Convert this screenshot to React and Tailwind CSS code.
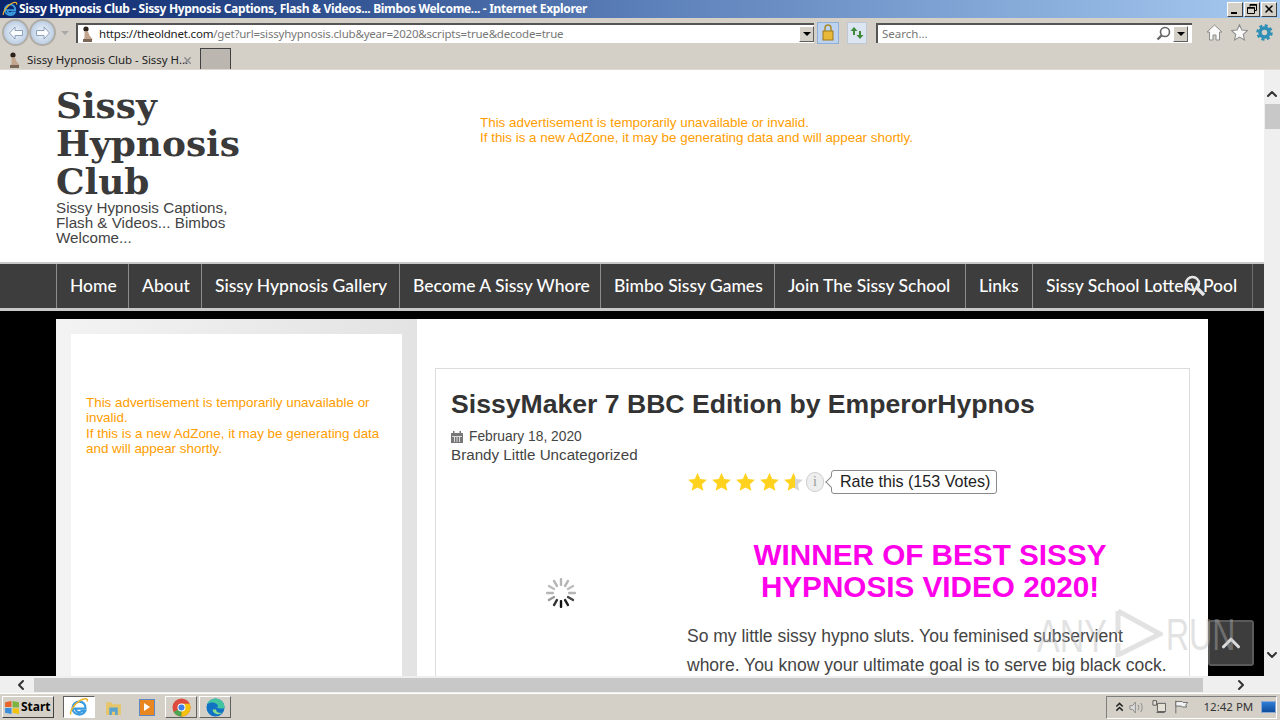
import { ChevronUp, ChevronDown, ChevronLeft, ChevronRight, X } from "lucide-react"

const sans = "font-['Liberation_Sans',Arial,sans-serif]"
const navItems = ["Home", "About", "Sissy Hypnosis Gallery", "Become A Sissy Whore", "Bimbo Sissy Games", "Join The Sissy School", "Links", "Sissy School Lottery Pool"]
const navWidths = ["w-[72px]", "w-[73px]", "w-[198px]", "w-[201px]", "w-[174px]", "w-[191px]", "w-[67px]", "w-[220px]"]

function IeLogo({ size = 16 }) {
  return (
    <svg width={size} height={size} viewBox="0 0 16 16" fill="none">
      <path d="M3.500 9.200h9.700C13.400 5.800 11.200 3.600 8.200 3.600 5.200 3.600 2.800 6 2.800 9c0 3 2.400 5 5.400 5 2.200 0 3.900-1 4.700-2.700H10c-.5.600-1.100.9-1.900.9-1.400 0-2.500-1-2.600-2.200" stroke="#3a9be0" strokeWidth="1.800" />
      <path d="M1.500 14C.2 11.500 5 4 11 1.800c2.800-1 4.200-.2 3.600 1.800" stroke="#f0b429" strokeWidth="1.200" />
    </svg>
  )
}

function Favicon() {
  return (
    <svg width="14" height="16" viewBox="0 0 14 16">
      <circle cx="5" cy="3" r="2.600" fill="#2c2019" />
      <path d="M3.500 5.500h3.500l1.500 4 3 3.500-1 2H2.500l1-4z" fill="#c2a58c" />
      <path d="M2 13h9v3H2z" fill="#7a6656" />
    </svg>
  )
}

function NavCircle({ dir }) {
  return (
    <div className="w-[27px] h-[27px] rounded-full border-[2px] border-[#b0aca6] bg-[radial-gradient(circle,#f3f6fa_0%,#b9cde4_75%)] flex items-center justify-center">
      <svg width="16" height="14" viewBox="0 0 16 14" className={dir === "right" ? "rotate-180" : ""}>
        <path d="M7 1 1.500 7 7 13V9.500h7.500v-5H7z" fill="#fbfcfe" stroke="#8aa0bc" />
      </svg>
    </div>
  )
}

function WinBtn({ children }) {
  return (
    <div className="w-[16px] h-[15px] bg-[#d4d0c8] border border-t-white border-l-white border-r-[#404040] border-b-[#404040] flex items-center justify-center text-black">
      {children}
    </div>
  )
}

function DropBtn() {
  return (
    <div className="w-[15px] h-[16px] bg-[#d4d0c8] border border-t-white border-l-white border-r-[#606060] border-b-[#606060] flex items-center justify-center">
      <div className="w-0 h-0 border-l-[4px] border-r-[4px] border-t-[4px] border-l-transparent border-r-transparent border-t-black" />
    </div>
  )
}

function GoldStar({ half }) {
  return (
    <svg width="21" height="20" viewBox="0 0 24 24">
      <defs>
        <linearGradient id="halfStar">
          <stop offset="60%" stopColor="#ffd21f" />
          <stop offset="60%" stopColor="#d6d6d6" />
        </linearGradient>
      </defs>
      <path d="M12 1l3.300 7.400 8 .8-6 5.400 1.700 7.900L12 18.500l-7 4 1.700-7.900-6-5.400 8-.8z" fill={half ? "url(#halfStar)" : "#ffd21f"} />
    </svg>
  )
}

function Spinner() {
  const bars = [0, 30, 60, 90, 120, 150, 180, 210, 240, 270, 300, 330]
  const colors = ["#b5b5b5", "#b5b5b5", "#bdbdbd", "#b5b5b5", "#444", "#222", "#111", "#333", "#999", "#b5b5b5", "#bdbdbd", "#b5b5b5"]
  return (
    <svg width="32" height="32" viewBox="0 0 32 32">
      {bars.map((a, i) => (
        <rect key={a} x="14.800" y="1" width="2.400" height="8" rx="1" fill={colors[i]} transform={`rotate(${a} 16 16)`} />
      ))}
    </svg>
  )
}

function TitleBar() {
  return (
    <div className="h-[18px] shrink-0 flex items-center bg-gradient-to-r from-[#0a246a] via-[#5b7fb8] to-[#a6caf0] pl-[2px] pr-[3px]">
      <IeLogo />
      <span className="ml-[1px] flex-1 text-white text-[12px] font-bold font-['Noto_Sans',sans-serif] leading-none tracking-[-0.32px]">
        Sissy Hypnosis Club - Sissy Hypnosis Captions, Flash &amp; Videos... Bimbos Welcome... - Internet Explorer
      </span>
      <div className="flex gap-[1px]">
        <WinBtn><div className="w-[6px] h-[2px] bg-black mt-[7px] -ml-[2px]" /></WinBtn>
        <WinBtn>
          <svg width="10" height="10" viewBox="0 0 10 10" fill="none" stroke="#000">
            <path d="M3 2.500V.5h6.500v6H7.500" />
            <path d="M3 1h6.500" strokeWidth="1.500" />
            <path d="M.5 3.500h7v6h-7z" />
            <path d="M.5 4h7" strokeWidth="1.500" />
          </svg>
        </WinBtn>
        <WinBtn><X size={12} strokeWidth={3} /></WinBtn>
      </div>
    </div>
  )
}

function AddressBar() {
  return (
    <div className="h-[28px] shrink-0 bg-[#d4d0c8] flex items-center pl-[2px] pt-[1px] font-['Noto_Sans',sans-serif]">
      <NavCircle dir="left" />
      <NavCircle dir="right" />
      <div className="w-0 h-0 ml-[5px] border-l-[4px] border-r-[4px] border-t-[4px] border-l-transparent border-r-transparent border-t-[#a8a8a8]" />
      <div className="ml-[7px] w-[738px] h-[20px] bg-white border-t-2 border-l-2 border-t-[#555] border-l-[#555] flex items-center pl-[3px]">
        <Favicon />
        <span className="ml-[4px] text-[11.500px] leading-none text-[#222] whitespace-nowrap tracking-[-0.2px]">
          https://theoldnet.com<span className="text-[#777]">/get?url=sissyhypnosis.club&amp;year=2020&amp;scripts=true&amp;decode=true</span>
        </span>
        <div className="flex-1" />
        <DropBtn />
      </div>
      <div className="ml-[3px] w-[22px] h-[22px] bg-[#bcd2ee] border border-[#8fb0d8] flex items-center justify-center">
        <svg width="12" height="17" viewBox="0 0 12 17">
          <path d="M3 7V4a3 3 0 0 1 6 0v3" fill="none" stroke="#a88a2a" strokeWidth="1.500" />
          <rect x="1" y="7" width="10" height="9" fill="#e8b838" stroke="#a07a18" />
        </svg>
      </div>
      <div className="ml-[8px] w-[20px] h-[22px] bg-[#dce6f2] border border-[#c0c8d4] flex items-center justify-center">
        <svg width="14" height="14" viewBox="0 0 14 14" fill="#3e8a3a">
          <path d="M4 1 0.500 5H3v4h2V5h2.500zM10 13l3.500-4H11V5H9v4H6.500z" />
        </svg>
      </div>
      <div className="ml-[9px] w-[316px] h-[20px] bg-white border-t-2 border-l-2 border-t-[#555] border-l-[#555] flex items-center pl-[4px] pr-[4px]">
        <span className="text-[11.500px] leading-none text-[#777] flex-1">Search...</span>
        <svg width="15" height="15" viewBox="0 0 15 15" fill="none" stroke="#666" className="mr-[2px]">
          <circle cx="9" cy="6" r="4.500" strokeWidth="1.600" />
          <path d="M5.500 9.500 1.500 13.500" strokeWidth="2.400" />
        </svg>
        <DropBtn />
      </div>
      <div className="ml-[14px] flex items-center gap-[8px]">
        <svg width="17" height="17" viewBox="0 0 17 17" fill="#fafafa" stroke="#8c8c8c">
          <path d="M8.500 1 1 8h2.500v8h3.500v-5h3v5h3.500V8H16z" />
        </svg>
        <svg width="17" height="17" viewBox="0 0 24 24" fill="#fafafa" stroke="#8c8c8c" strokeWidth="1.500">
          <path d="M12 1l3.300 7.400 8 .8-6 5.400 1.700 7.900L12 18.500l-7 4 1.700-7.900-6-5.400 8-.8z" />
        </svg>
        <svg width="17" height="17" viewBox="0 0 17 17" fill="none" stroke="#2f8fb5">
          <circle cx="8.500" cy="8.500" r="4.500" strokeWidth="3.500" />
          <circle cx="8.500" cy="8.500" r="7" strokeWidth="2.500" strokeDasharray="3 2.500" />
        </svg>
      </div>
    </div>
  )
}

function TabStrip() {
  return (
    <div className="h-[24px] shrink-0 bg-[#d4d0c8] flex items-end border-b border-[#dedad3] font-['Noto_Sans',sans-serif]">
      <div className="ml-[8px] w-[14px] h-[21px] pt-[2px] flex items-center"><Favicon /></div>
      <div className="ml-[5px] w-[155px] h-[21px] pt-[3px] flex items-center">
        <span className="text-[11.500px] leading-none text-[#222] whitespace-nowrap tracking-[-0.05px]">Sissy Hypnosis Club - Sissy H...</span>
      </div>
      <div className="h-[21px] pt-[3px] flex items-center">
        <X size={11} strokeWidth={3} className="text-[#8a8a8a]" />
      </div>
      <div className="ml-[7px] w-[31px] h-[21px] bg-[#bcb6b0] border-t border-l border-r border-[#404040]" />
    </div>
  )
}

function AdNotice({ className }) {
  return (
    <div className={`text-[#ff9d00] text-[13.400px] leading-[15px] ${sans} ${className}`}>
      This advertisement is temporarily unavailable or invalid.<br />
      If this is a new AdZone, it may be generating data and will appear shortly.
    </div>
  )
}

function SiteHeader() {
  return (
    <header className="h-[192px] shrink-0 bg-white flex pl-[56px]">
      <div className="w-[200px] pt-[16px]">
        <h1 className="font-['DejaVu_Serif',serif] font-bold text-[35.900px] leading-[38px] text-[#3a3a3a]">Sissy Hypnosis Club</h1>
        <p className={`text-[15.200px] leading-[15px] text-[#444] w-[190px] ${sans}`}>Sissy Hypnosis Captions, Flash &amp; Videos... Bimbos Welcome...</p>
      </div>
      <AdNotice className="ml-[224px] mt-[45px]" />
    </header>
  )
}

function NavBar() {
  return (
    <nav className="relative shrink-0 h-[49px] bg-[#3d3d3d] border-t-[2px] border-b-[3px] border-[#c8c8c8] pl-[56px] flex">
      {navItems.map((item, i) => (
        <div key={item} className={`${navWidths[i]} shrink-0 h-full border-l border-[#8c8c8c] pl-[13px] flex items-center text-white text-[17.500px] font-medium font-['Lato',sans-serif] whitespace-nowrap`}>
          {item}
        </div>
      ))}
      <div className="border-l border-[#6e6e6e] h-full" />
      <svg width="22" height="22" viewBox="0 0 22 22" fill="none" stroke="#e6e6e6" className="absolute left-[1184px] top-[11px]">
        <circle cx="8.500" cy="8.500" r="6.500" strokeWidth="2.500" />
        <path d="M13.500 13.500 20 20" strokeWidth="3.500" />
      </svg>
    </nav>
  )
}

function Sidebar() {
  return (
    <aside className="w-[361px] shrink-0 bg-gradient-to-r from-[#f3f3f3] to-[#e3e3e3] pt-[15px] px-[15px]">
      <div className="bg-white h-full pt-[61px] px-[15px]">
        <div className={`text-[#ff9d00] text-[13.400px] leading-[15.300px] ${sans}`}>
          This advertisement is temporarily unavailable or invalid.<br />
          If this is a new AdZone, it may be generating data and will appear shortly.
        </div>
      </div>
    </aside>
  )
}

function Article() {
  return (
    <article className={`mt-[49px] ml-[18px] w-[755px] shrink-0 border border-[#dcdcdc] border-b-0 px-[15px] pt-[19px] ${sans}`}>
      <h2 className="text-[26.600px] leading-[32px] font-bold text-[#333]">SissyMaker 7 BBC Edition by EmperorHypnos</h2>
      <div className="mt-[8px] flex items-center text-[13.800px] leading-[18px] text-[#444]">
        <svg width="12" height="12" viewBox="0 0 12 12" className="mr-[6px]" fill="#777">
          <path d="M0 2h12v10H0z" />
          <path d="M2 0h1.500v2H2zM8.500 0H10v2H8.500z" />
          <path d="M1 5h10v1H1z" fill="#ddd" />
          <path d="M3 5h1v6H3zM5.500 5h1v6h-1zM8 5h1v6H8z" fill="#ddd" />
        </svg>
        <span>February 18, 2020</span>
      </div>
      <div className="text-[15.200px] leading-[17px] text-[#444]">Brandy Little Uncategorized</div>
      <div className="flex pt-[1px]">
        <div className="w-[236px] pt-[113px] pl-[94px] shrink-0">
          <Spinner />
        </div>
        <div className="w-[490px] pt-[6px]">
          <div className="flex items-center h-[24px]">
            <div className="flex gap-[3px]">
              <GoldStar /><GoldStar /><GoldStar /><GoldStar /><GoldStar half />
            </div>
            <div className="ml-[2px] w-[18px] h-[20px] rounded-full border border-[#cfcfcf] bg-[#eee] text-[#999] text-[14px] leading-[18px] text-center font-['Liberation_Serif',serif]">i</div>
            <div className="relative ml-[7px] h-[24px] pl-[8px] pr-[6px] border border-[#8a8a8a] rounded-[3px] text-[16.100px] leading-[21px] text-[#222] bg-white whitespace-nowrap">
              <div className="absolute -left-[5px] top-[7px] w-[8px] h-[8px] rotate-45 bg-white border-l border-b border-[#8a8a8a]" />
              Rate this (153 Votes)
            </div>
          </div>
          <h3 className="mt-[45px] text-center text-[#ff00ea] text-[29.700px] leading-[32px] font-bold w-[486px]">
            WINNER OF BEST SISSY<br />HYPNOSIS VIDEO 2020!
          </h3>
          <p className="mt-[19px] text-[17.500px] leading-[29px] text-[#444] whitespace-nowrap">
            So my little sissy hypno sluts. You feminised subservient<br />
            whore. You know your ultimate goal is to serve big black cock.
          </p>
        </div>
      </div>
    </article>
  )
}

function PageBody() {
  return (
    <div className="flex-1 min-h-0 bg-black pt-[8px] pl-[56px]">
      <div className="w-[1152px] h-full bg-white flex">
        <Sidebar />
        <Article />
      </div>
    </div>
  )
}

function Watermark() {
  return (
    <div className="absolute left-[1037px] top-[540px] w-[200px] h-[50px] flex items-end opacity-40 text-[#b9b9b9] pointer-events-none font-['Liberation_Sans',sans-serif]">
      <span className="w-[78px] text-[34px] leading-[36px] origin-bottom scale-y-[1.350]">ANY</span>
      <svg width="48" height="48" viewBox="0 0 48 48" fill="none" className="mb-[3px]">
        <path d="M3 2 45 25 3 46V34M3 2v22" stroke="currentColor" strokeWidth="5" />
      </svg>
      <span className="ml-[3px] w-[68px] text-[32px] leading-[36px] origin-bottom scale-y-[1.400] whitespace-nowrap">RUN</span>
    </div>
  )
}

function VScrollbar() {
  return (
    <div className="w-[16px] shrink-0 bg-[#efefef] flex flex-col items-center">
      <ChevronUp size={16} strokeWidth={3} className="mt-[16px] text-[#333]" />
      <div className="mt-[2px] w-[15px] h-[25px] bg-[#c8c8c8]" />
      <div className="flex-1" />
      <ChevronDown size={16} strokeWidth={3} className="mb-[13px] text-[#333]" />
    </div>
  )
}

function HScrollbar() {
  return (
    <div className="h-[17px] shrink-0 bg-[#efefef] flex items-center">
      <div className="w-[34px] flex justify-center pl-[7px]"><ChevronLeft size={16} strokeWidth={3} className="text-[#333]" /></div>
      <div className="w-[1169px] h-[14px] bg-[#c8c8c8]" />
      <div className="flex-1 flex justify-center pr-[2px]"><ChevronRight size={16} strokeWidth={3} className="text-[#333]" /></div>
    </div>
  )
}

function TaskButton({ active, children }) {
  return (
    <div className={`w-[32px] h-[22px] flex items-center justify-center border ${active ? "bg-white border-t-[#606060] border-l-[#606060] border-r-white border-b-white" : "bg-[#d4d0c8] border-t-white border-l-white border-r-[#606060] border-b-[#606060]"}`}>
      {children}
    </div>
  )
}

function Taskbar() {
  return (
    <div className="h-[27px] shrink-0 bg-[#d4d0c8] border-t border-white flex items-center pl-[2px] pr-[3px] font-['Noto_Sans',sans-serif]">
      <div className="w-[52px] h-[22px] bg-[#d4d0c8] border border-t-white border-l-white border-r-[#404040] border-b-[#404040] flex items-center pl-[1px] gap-[1px]">
        <svg width="16" height="15" viewBox="0 0 15 14">
          <path d="M1 2 7 1v5.500H1z" fill="#e8642c" />
          <path d="M8 1l6 1v5H8z" fill="#7cb342" />
          <path d="M1 7.500h6V13l-6-1z" fill="#3a8edb" />
          <path d="M8 8h6v5l-6-1z" fill="#f4c20d" />
        </svg>
        <span className="text-[12px] font-bold leading-none text-black">Start</span>
      </div>
      <div className="ml-[9px]"><TaskButton active><IeLogo size={20} /></TaskButton></div>
      <div className="ml-[3px] w-[31px] flex justify-center">
        <svg width="17" height="17" viewBox="0 0 16 16">
          <path d="M1 3h5l1 2h8v10H1z" fill="#e5c66a" />
          <path d="M4 8h8v7H9.500v-3h-3v3H4z" fill="#5ba3cf" />
        </svg>
      </div>
      <div className="ml-[2px] w-[31px] flex justify-center">
        <div className="w-[16px] h-[17px] bg-[#e9861f] border border-[#5c88c6] flex items-center justify-center">
          <div className="w-0 h-0 border-t-[4px] border-b-[4px] border-l-[6px] border-t-transparent border-b-transparent border-l-white" />
        </div>
      </div>
      <div className="ml-[3px]">
        <TaskButton>
          <svg width="19" height="19" viewBox="0 0 20 20">
            <circle cx="10" cy="10" r="9.500" fill="#dd4b3e" />
            <path d="M10 10 1.800 14.800A9.500 9.500 0 0 0 10 19.500z" fill="#4ba64f" />
            <path d="M10 10v9.500A9.500 9.500 0 0 0 18.600 6H10z" fill="#f4c20d" />
            <circle cx="10" cy="10" r="4.200" fill="#fff" />
            <circle cx="10" cy="10" r="3.200" fill="#3f7fe6" />
          </svg>
        </TaskButton>
      </div>
      <div className="ml-[2px]">
        <TaskButton>
          <svg width="19" height="19" viewBox="0 0 20 20">
            <circle cx="10" cy="10" r="9.500" fill="#1273c4" />
            <path d="M19.500 10c0-5-4-9.500-9.500-9.500C6 .5 2.500 3 1 6.500 4 4 9 4 11.500 6.500 13 8 13 10 11 10c3 1 8.500 2 8.500 0z" fill="#43c5a0" />
            <path d="M7 12c0 3 3 5 6 5 2 0 3-.5 4-1.500-3 .5-6 0-6.500-3.500z" fill="#8fe08c" />
          </svg>
        </TaskButton>
      </div>
      <div className="flex-1" />
      <div className="w-[171px] h-[23px] border border-t-[#808080] border-l-[#808080] border-r-white border-b-white flex items-center pl-[5px] text-[#333]">
        <svg width="10" height="10" viewBox="0 0 10 10" fill="none" stroke="#222" strokeWidth="1.600" className="ml-[3px]">
          <path d="M1.500 4.500 5 1l3.500 3.500M1.500 9 5 5.500 8.500 9" />
        </svg>
        <svg className="ml-[5px]" width="17" height="15" viewBox="0 0 17 14" fill="none" stroke="#888"><path d="M1 5h3l3-4v12l-3-4H1z" fill="#ddd" /><path d="M10 4c1 2 1 4 0 6M13 2c2 3 2 7 0 10" /></svg>
        <svg className="ml-[7px]" width="16" height="16" viewBox="0 0 16 16" fill="#e4e0d6" stroke="#555"><path d="M1 1h4v5H1zM6 4h9v9H6zM5 14h9" /></svg>
        <svg className="ml-[8px]" width="16" height="16" viewBox="0 0 16 16" fill="#f2f2f2" stroke="#666"><path d="M2 1v14" /><path d="M2 2h7l1 1h5l-2 3 1 2H9L8 7H2z" /></svg>
        <span className="ml-[15px] text-[11.500px] leading-none whitespace-nowrap">12:42 PM</span>
        <div className="ml-[8px] w-[16px] h-[12px] bg-gradient-to-b from-[#2f7ed8] to-[#0f4d9c] border border-[#8aa8d0]" />
      </div>
    </div>
  )
}

export default function App() {
  return (
    <div className="relative w-[1280px] h-[720px] overflow-hidden flex flex-col bg-[#d4d0c8]">
      <TitleBar />
      <AddressBar />
      <TabStrip />
      <div className="flex-1 min-h-0 flex">
        <main className="relative w-[1264px] shrink-0 flex flex-col overflow-hidden">
          <SiteHeader />
          <NavBar />
          <PageBody />
          <div className="absolute left-[1208px] top-[550px] w-[46px] h-[46px] bg-[#3d3d3d] border-[2px] border-[#5a5a5a] rounded-[3px] flex items-center justify-center">
            <ChevronUp size={30} strokeWidth={2.500} className="text-[#ddd]" />
          </div>
          <Watermark />
        </main>
        <VScrollbar />
      </div>
      <HScrollbar />
      <Taskbar />
    </div>
  )
}
